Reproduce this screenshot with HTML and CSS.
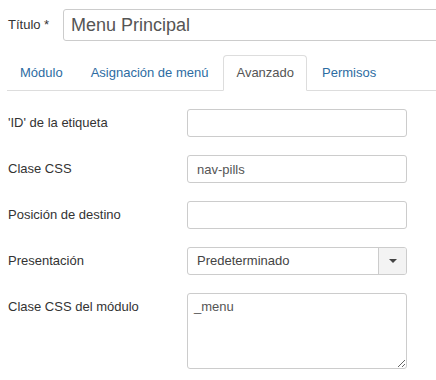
FILE: index.html
```html
<!DOCTYPE html>
<html lang="es">
<head>
    <meta charset="UTF-8">
    <title>Módulo - Menu Principal</title>
    <link rel="stylesheet" href="styles.css">
</head>
<body>
    <!-- Titulo -->
    <div class="title-row">
        <label class="title-label" for="jform_title">Título *</label>
        <input class="title-input" id="jform_title" type="text" value="Menu Principal">
    </div>

    <!-- Pestañas -->
    <ul class="nav-tabs">
        <li><a href="#general">Módulo</a></li>
        <li><a href="#assignment">Asignación de menú</a></li>
        <li class="active"><a href="#advanced">Avanzado</a></li>
        <li><a href="#permissions">Permisos</a></li>
    </ul>

    <div class="tab-content">
        <div class="control-group">
            <label class="control-label">'ID' de la etiqueta</label>
            <div class="controls"><input class="field" type="text"></div>
        </div>
        <div class="control-group">
            <label class="control-label">Clase CSS</label>
            <div class="controls"><input class="field" type="text" value="nav-pills"></div>
        </div>
        <div class="control-group">
            <label class="control-label">Posición de destino</label>
            <div class="controls"><input class="field" type="text"></div>
        </div>
        <div class="control-group">
            <label class="control-label">Presentación</label>
            <div class="controls">
                <div class="chosen-single">
                    <span>Predeterminado</span>
                    <div class="chosen-arrow"><b></b></div>
                </div>
            </div>
        </div>
        <div class="control-group">
            <label class="control-label">Clase CSS del módulo</label>
            <div class="controls"><textarea class="field area">_menu</textarea></div>
        </div>
    </div>
</body>
</html>
```

FILE: styles.css
```css
* {
    box-sizing: border-box;
}

body {
    margin: 0;
    padding: 9px 0 0 7px;
    background: #fff;
    color: #333;
    font-family: "Liberation Sans", Arial, sans-serif;
    font-size: 13px;
    line-height: 18px;
    overflow: hidden;
}

/* Titulo (el campo sigue fuera del borde derecho) */
.title-row {
    display: flex;
    align-items: center;
    white-space: nowrap;
    overflow: hidden;
}

.title-label {
    width: 56px;
    padding-left: 1px;
    flex-shrink: 0;
}

.title-input {
    width: 400px;
    flex-shrink: 0;
    height: 32px;
    padding: 4px 7px;
    border: 1px solid #ccc;
    border-radius: 3px;
    font-family: inherit;
    font-size: 18px;
    line-height: 22px;
    color: #555;
}

/* Pestañas */
.nav-tabs {
    display: flex;
    list-style: none;
    margin: 14px 0 0;
    padding: 0;
    border-bottom: 1px solid #ddd;
}

.nav-tabs li {
    margin-right: 2px;
    margin-bottom: -1px;
}

.nav-tabs a {
    display: block;
    padding: 8px 12px;
    border: 1px solid transparent;
    border-radius: 4px 4px 0 0;
    color: #2d6ca2;
    text-decoration: none;
    line-height: 18px;
}

.nav-tabs .active a {
    color: #555;
    background: #fff;
    border-color: #ddd #ddd transparent;
}

/* Formulario */
.tab-content {
    padding-top: 18px;
}

.control-group {
    display: flex;
    margin-bottom: 18px;
}

.control-label {
    width: 180px;
    padding-top: 5px;
    padding-left: 1px;
    flex-shrink: 0;
}

.field {
    display: block;
    width: 220px;
    height: 28px;
    padding: 4px 9px;
    border: 1px solid #ccc;
    border-radius: 3px;
    font-family: inherit;
    font-size: 13px;
    line-height: 18px;
    color: #555;
}

.area {
    height: 76px;
    padding: 4px 6px;
    resize: both;
}

.chosen-single {
    display: flex;
    width: 220px;
    height: 28px;
    border: 1px solid #ccc;
    border-radius: 3px;
    color: #444;
    overflow: hidden;
}

.chosen-single span {
    flex: 1;
    padding: 4px 9px;
}

.chosen-arrow {
    width: 28px;
    display: flex;
    align-items: center;
    justify-content: center;
    border-left: 1px solid #ccc;
    background: #f3f3f3;
}

.chosen-arrow b {
    width: 0;
    height: 0;
    border-left: 4px solid transparent;
    border-right: 4px solid transparent;
    border-top: 4px solid #444;
}
```
